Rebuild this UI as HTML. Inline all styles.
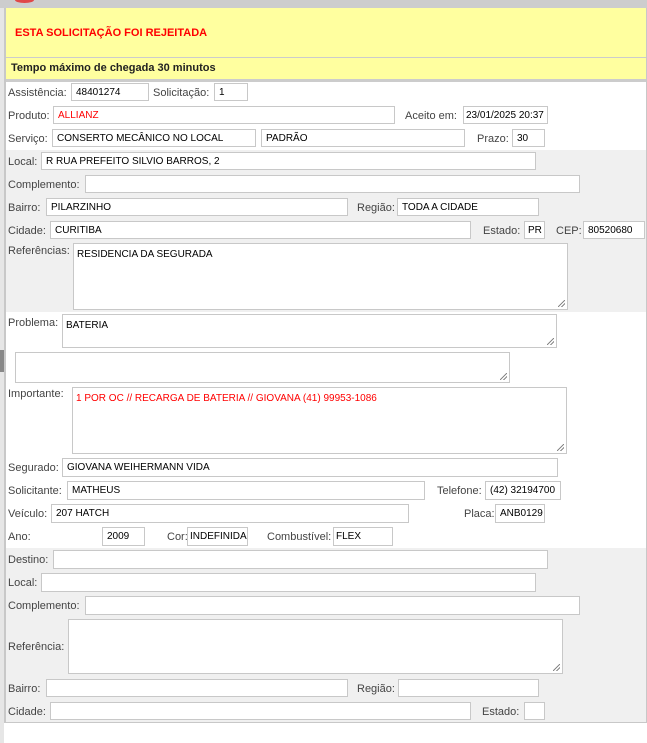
<!DOCTYPE html>
<html><head><meta charset="utf-8"><style>
*{margin:0;padding:0;box-sizing:border-box}
body{width:647px;height:743px;background:#fff;position:relative;overflow:hidden;font-family:"Liberation Sans","DejaVu Sans",sans-serif}
.a{position:absolute}
.l{position:absolute;font-size:11px;color:#444;white-space:nowrap}
.i{position:absolute;background:#fff;border:1px solid #c8c8c8;font-size:10px;color:#000;padding:0 4px;display:flex;align-items:center;white-space:nowrap;overflow:hidden}
.t{position:absolute;background:#fff;border:1px solid #c8c8c8;font-size:10px;color:#000;padding:5px 3px}
.t:after{content:"";position:absolute;right:2px;bottom:2px;width:7px;height:7px;background:linear-gradient(135deg,transparent 45%,#888 45%,#888 55%,transparent 55%,transparent 70%,#888 70%,#888 80%,transparent 80%)}
.r{color:#f00}
</style></head><body>
<div class="a" style="left:0;top:0;width:647px;height:8px;background:#cdcdcd"></div>
<div class="a" style="left:15px;top:-3px;width:19px;height:6px;border-radius:50%;background:#e04848"></div>
<div class="a" style="left:0;top:8px;width:4px;height:735px;background:#e6e6e6"></div>
<div class="a" style="left:0;top:350px;width:4px;height:22px;background:#888"></div>
<div class="a" style="left:4px;top:8px;width:643px;height:715px;border-left:2px solid #c8c8c8;border-right:1px solid #c8c8c8;border-bottom:1px solid #c8c8c8"></div>
<div class="a" style="left:6px;top:8px;width:640px;height:50px;background:#ffff9f;border-bottom:1px solid #ccc"></div>
<div class="a" style="left:15px;top:27px;font-size:11px;font-weight:bold;color:#f00">ESTA SOLICITAÇÃO FOI REJEITADA</div>
<div class="a" style="left:6px;top:58px;width:640px;height:24px;background:#ffff9f;border-bottom:3px solid #ccc"></div>
<div class="a" style="left:11px;top:62px;font-size:11px;font-weight:bold;color:#222">Tempo máximo de chegada 30 minutos</div>
<div class="a" style="left:6px;top:150px;width:640px;height:162px;background:#f0f0f0"></div>
<div class="a" style="left:6px;top:548px;width:640px;height:174px;background:#f0f0f0"></div>

<div class="l" style="left:8px;top:87px">Assistência:</div><div class="i" style="left:71px;top:83px;width:78px;height:18px">48401274</div>
<div class="l" style="left:153px;top:87px">Solicitação:</div><div class="i" style="left:214px;top:83px;width:34px;height:18px">1</div>
<div class="l" style="left:8px;top:110px">Produto:</div><div class="i r" style="left:53px;top:106px;width:342px;height:18px">ALLIANZ</div>
<div class="l" style="left:405px;top:110px">Aceito em:</div><div class="i" style="left:463px;top:106px;width:85px;height:18px;padding:0 2px">23/01/2025 20:37</div>
<div class="l" style="left:8px;top:133px">Serviço:</div><div class="i" style="left:52px;top:129px;width:204px;height:18px">CONSERTO MECÂNICO NO LOCAL</div>
<div class="i" style="left:261px;top:129px;width:204px;height:18px">PADRÃO</div>
<div class="l" style="left:477px;top:133px">Prazo:</div><div class="i" style="left:512px;top:129px;width:33px;height:18px">30</div>

<div class="l" style="left:8px;top:156px">Local:</div><div class="i" style="left:41px;top:152px;width:495px;height:18px">R RUA PREFEITO SILVIO BARROS, 2</div>
<div class="l" style="left:8px;top:179px">Complemento:</div><div class="i" style="left:85px;top:175px;width:495px;height:18px"></div>
<div class="l" style="left:8px;top:202px">Bairro:</div><div class="i" style="left:46px;top:198px;width:302px;height:18px">PILARZINHO</div>
<div class="l" style="left:357px;top:202px">Região:</div><div class="i" style="left:397px;top:198px;width:142px;height:18px">TODA A CIDADE</div>
<div class="l" style="left:8px;top:225px">Cidade:</div><div class="i" style="left:50px;top:221px;width:421px;height:18px">CURITIBA</div>
<div class="l" style="left:483px;top:225px">Estado:</div><div class="i" style="left:524px;top:221px;width:21px;height:18px;padding:0 3px">PR</div>
<div class="l" style="left:556px;top:225px">CEP:</div><div class="i" style="left:583px;top:221px;width:62px;height:18px">80520680</div>
<div class="l" style="left:8px;top:245px">Referências:</div><div class="t" style="left:73px;top:243px;width:495px;height:67px">RESIDENCIA DA SEGURADA</div>

<div class="l" style="left:8px;top:317px">Problema:</div><div class="t" style="left:62px;top:314px;width:495px;height:34px">BATERIA</div>
<div class="t" style="left:15px;top:352px;width:495px;height:31px"></div>
<div class="l" style="left:8px;top:388px">Importante:</div><div class="t r" style="left:72px;top:387px;width:495px;height:67px">1 POR OC // RECARGA DE BATERIA // GIOVANA (41) 99953-1086</div>

<div class="l" style="left:8px;top:462px">Segurado:</div><div class="i" style="left:62px;top:458px;width:496px;height:19px">GIOVANA WEIHERMANN VIDA</div>
<div class="l" style="left:8px;top:485px">Solicitante:</div><div class="i" style="left:67px;top:481px;width:358px;height:19px">MATHEUS</div>
<div class="l" style="left:437px;top:485px">Telefone:</div><div class="i" style="left:485px;top:481px;width:76px;height:19px">(42) 32194700</div>
<div class="l" style="left:8px;top:508px">Veículo:</div><div class="i" style="left:51px;top:504px;width:358px;height:19px">207 HATCH</div>
<div class="l" style="left:464px;top:508px">Placa:</div><div class="i" style="left:495px;top:504px;width:50px;height:19px">ANB0129</div>
<div class="l" style="left:8px;top:531px">Ano:</div><div class="i" style="left:102px;top:527px;width:43px;height:19px">2009</div>
<div class="l" style="left:167px;top:531px">Cor:</div><div class="i" style="left:187px;top:527px;width:61px;height:19px;padding:0 2px">INDEFINIDA</div>
<div class="l" style="left:267px;top:531px">Combustível:</div><div class="i" style="left:333px;top:527px;width:60px;height:19px;padding:0 2px">FLEX</div>

<div class="l" style="left:8px;top:554px">Destino:</div><div class="i" style="left:53px;top:550px;width:495px;height:19px"></div>
<div class="l" style="left:8px;top:577px">Local:</div><div class="i" style="left:41px;top:573px;width:495px;height:19px"></div>
<div class="l" style="left:8px;top:600px">Complemento:</div><div class="i" style="left:85px;top:596px;width:495px;height:19px"></div>
<div class="l" style="left:8px;top:641px">Referência:</div><div class="t" style="left:68px;top:619px;width:495px;height:55px"></div>
<div class="l" style="left:8px;top:683px">Bairro:</div><div class="i" style="left:46px;top:679px;width:302px;height:18px"></div>
<div class="l" style="left:357px;top:683px">Região:</div><div class="i" style="left:398px;top:679px;width:141px;height:18px"></div>
<div class="l" style="left:8px;top:706px">Cidade:</div><div class="i" style="left:50px;top:702px;width:421px;height:18px"></div>
<div class="l" style="left:482px;top:706px">Estado:</div><div class="i" style="left:524px;top:702px;width:21px;height:18px"></div>
</body></html>
